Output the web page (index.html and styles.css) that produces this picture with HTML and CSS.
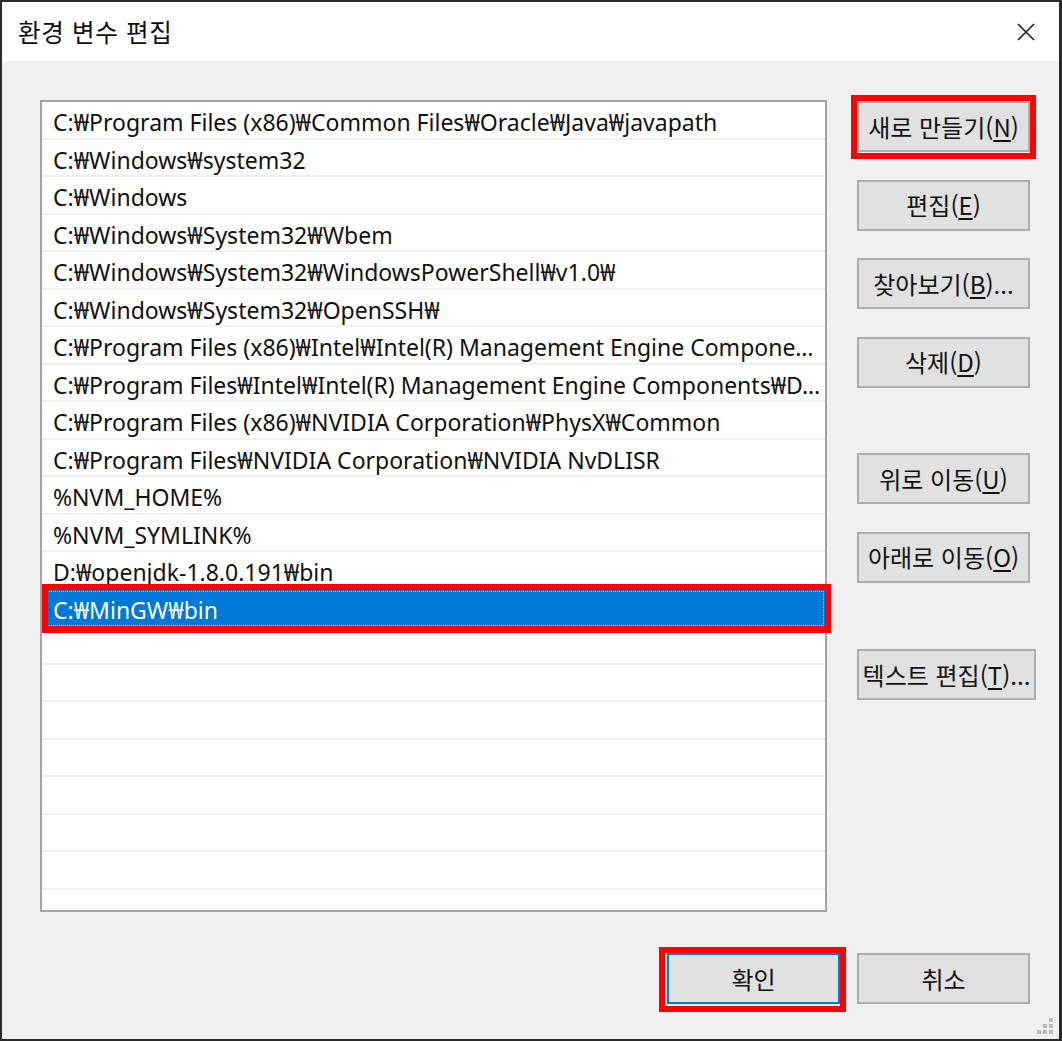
FILE: index.html
```html
<!DOCTYPE html>
<html lang="ko">
<head>
<meta charset="utf-8">
<title>환경 변수 편집</title>
<link rel="stylesheet" href="styles.css">
</head>
<body>
<div class="window">
  <header class="titlebar">
    <h1 class="title">환경 변수 편집</h1>
    <button class="close" aria-label="닫기">
      <svg width="18" height="18" viewBox="0 0 18 18"><path d="M1 1 L17 17 M17 1 L1 17" stroke="#1b1b1b" stroke-width="1.6" fill="none"/></svg>
    </button>
  </header>
  <main class="content">
    <div class="main-row">
      <ul class="pathlist">
        <li class="item">C:₩Program Files (x86)₩Common Files₩Oracle₩Java₩javapath</li>
        <li class="item">C:₩Windows₩system32</li>
        <li class="item">C:₩Windows</li>
        <li class="item">C:₩Windows₩System32₩Wbem</li>
        <li class="item">C:₩Windows₩System32₩WindowsPowerShell₩v1.0₩</li>
        <li class="item">C:₩Windows₩System32₩OpenSSH₩</li>
        <li class="item">C:₩Program Files (x86)₩Intel₩Intel(R) Management Engine Compone…</li>
        <li class="item">C:₩Program Files₩Intel₩Intel(R) Management Engine Components₩D…</li>
        <li class="item">C:₩Program Files (x86)₩NVIDIA Corporation₩PhysX₩Common</li>
        <li class="item">C:₩Program Files₩NVIDIA Corporation₩NVIDIA NvDLISR</li>
        <li class="item">%NVM_HOME%</li>
        <li class="item">%NVM_SYMLINK%</li>
        <li class="item">D:₩openjdk-1.8.0.191₩bin</li>
        <li class="item selected">C:₩MinGW₩bin</li>
        <li class="item empty"></li>
        <li class="item empty"></li>
        <li class="item empty"></li>
        <li class="item empty"></li>
        <li class="item empty"></li>
        <li class="item empty"></li>
        <li class="item empty"></li>
        <li class="item empty"></li>
      </ul>
      <div class="side">
        <button class="btn">새로 만들기(<u>N</u>)</button>
        <button class="btn">편집(<u>E</u>)</button>
        <button class="btn">찾아보기(<u>B</u>)...</button>
        <button class="btn">삭제(<u>D</u>)</button>
        <button class="btn group-start">위로 이동(<u>U</u>)</button>
        <button class="btn">아래로 이동(<u>O</u>)</button>
        <button class="btn btn-wide group-start2">텍스트 편집(<u>T</u>)...</button>
      </div>
    </div>
    <footer class="actions">
      <button class="btn btn-default">확인</button>
      <button class="btn">취소</button>
    </footer>
  </main>
  <span class="grip" aria-hidden="true">
    <i class="d d1"></i><i class="d d2"></i><i class="d d3"></i><i class="d d4"></i><i class="d d5"></i><i class="d d6"></i>
  </span>
  <div class="mark mark-new"></div>
  <div class="mark mark-row"></div>
  <div class="mark mark-ok"></div>
</div>
</body>
</html>
```
FILE: styles.css
```css
* { box-sizing: border-box; }
html, body { margin: 0; padding: 0; background: #ffffff; }
body {
  font-family: "Noto Sans", "Noto Sans CJK KR", sans-serif;
  color: #000;
}
.window {
  position: relative;
  width: 1062px;
  height: 1041px;
  border-top: 2px solid #2a2a2a;
  border-left: 2px solid #2a2a2a;
  border-right: 3px solid #2a2a2a;
  border-bottom: 2px solid #2a2a2a;
  background: #f0f0f0;
  display: flex;
  flex-direction: column;
  overflow: hidden;
}
.titlebar {
  flex: none;
  height: 59px;
  background: #ffffff;
  display: flex;
  align-items: center;
  justify-content: space-between;
  padding-left: 16px;
}
.title {
  margin: 0;
  font-family: "Noto Sans CJK KR", sans-serif;
  font-weight: 400;
  font-size: 24.5px;
  line-height: 32px;
  color: #0d0d0d;
  letter-spacing: 0.7px;
}
.close {
  width: 46px;
  height: 40px;
  margin-right: 10px;
  border: 0;
  background: transparent;
  padding: 0;
  display: flex;
  align-items: center;
  justify-content: center;
}
.content {
  flex: 1;
  padding: 39px 23px 0 38px;
  display: flex;
  flex-direction: column;
}
.main-row {
  display: flex;
  align-items: flex-start;
}
.pathlist {
  flex: none;
  list-style: none;
  margin: 0;
  padding: 0;
  width: 787px;
  height: 812px;
  border: 2px solid #a3a3a3;
  background: #ffffff;
  overflow: hidden;
}
.item {
  height: 37.5px;
  border-bottom: 2px solid #f0f0f0;
  padding: 5px 2px 0 11px;
  font-size: 23px;
  line-height: 30px;
  color: #111;
  white-space: nowrap;
  overflow: hidden;
}
.item.selected {
  background: #0078d7;
  color: #ffffff;
  border-bottom-color: #0078d7;
  outline: 1px dotted #f2d3a6;
  outline-offset: -2px;
}
.side {
  flex: none;
  margin-left: 30px;
  width: 179px;
  padding-top: 1px;
  display: flex;
  flex-direction: column;
  align-items: flex-start;
  gap: 27.5px;
}
.btn {
  width: 173px;
  height: 51px;
  border: 2px solid #adadad;
  background: #e1e1e1;
  font-family: "Noto Sans CJK KR", sans-serif;
  font-size: 24px;
  line-height: 30px;
  color: #111;
  padding: 0;
  white-space: nowrap;
}
.btn u { text-underline-offset: 3px; }
.btn-wide { width: 179px; }
.group-start { margin-top: 38px; }
.group-start2 { margin-top: 39px; }
.actions {
  margin-top: 41px;
  margin-right: 6px;
  display: flex;
  justify-content: flex-end;
  gap: 17px;
}
.btn-default {
  border-color: #0078d7;
}
.grip {
  position: absolute;
  right: 6px;
  bottom: 4px;
  width: 17px;
  height: 17px;
}
.d {
  position: absolute;
  width: 4px;
  height: 4px;
  background: #bcbcbc;
}
.d1 { right: 0; top: 0; }
.d2 { right: 0; top: 6px; }
.d3 { right: 6px; top: 6px; }
.d4 { right: 0; top: 12px; }
.d5 { right: 6px; top: 12px; }
.d6 { right: 12px; top: 12px; }
.mark {
  position: absolute;
  border: 6px solid #ff0000;
  pointer-events: none;
}
.mark-new { left: 849px; top: 93px; width: 185px; height: 64px; }
.mark-row { left: 40px; top: 582px; width: 789px; height: 49px; border-width: 6px 6px 7px 6px; }
.mark-ok { left: 657px; top: 945px; width: 187px; height: 65px; }
```
